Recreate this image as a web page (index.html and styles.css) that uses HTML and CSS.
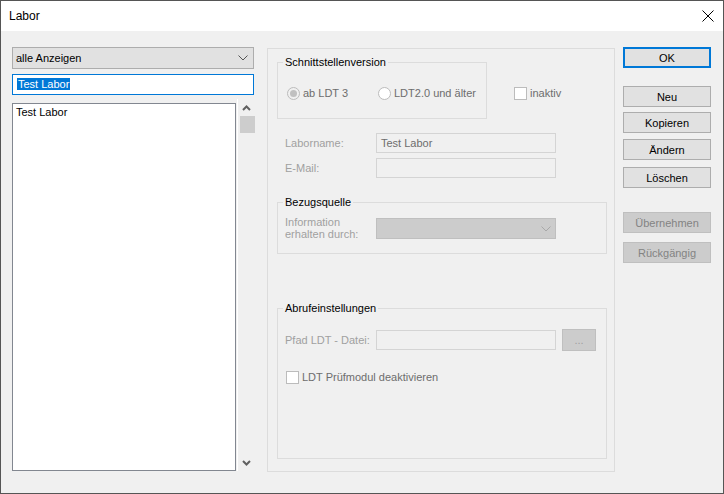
FILE: index.html
```html
<!DOCTYPE html>
<html lang="de">
<head>
    <meta charset="UTF-8">
    <title>Labor</title>
    <link rel="stylesheet" href="styles.css">
</head>
<body>

<div class="window">
    <div class="titlebar">
        <span class="title">Labor</span>
        <svg class="close" width="12" height="12" viewBox="0 0 12 12"><path d="M0.5 0.5 L11.5 11.5 M11.5 0.5 L0.5 11.5" stroke="#000" stroke-width="1" fill="none"/></svg>
    </div>

    <div class="content">
        <!-- left: filter + list -->
        <div class="left">
            <div class="combo">
                <span>alle Anzeigen</span>
                <svg width="10" height="6" viewBox="0 0 10 6"><path d="M0.5 0.5 L5 5 L9.5 0.5" stroke="#555" fill="none"/></svg>
            </div>
            <div class="searchbox"><span class="selected">Test Labor</span></div>
            <div class="listrow">
                <div class="listbox">
                    <div class="item">Test Labor</div>
                </div>
                <div class="scrollbar">
                    <svg class="arrow" width="9" height="6" viewBox="0 0 9 6"><path d="M1 5 L4.5 1.5 L8 5" stroke="#606060" stroke-width="2" fill="none"/></svg>
                    <div class="thumb"></div>
                    <div class="track"></div>
                    <svg class="arrow" width="9" height="6" viewBox="0 0 9 6"><path d="M1 1 L4.5 4.5 L8 1" stroke="#606060" stroke-width="2" fill="none"/></svg>
                </div>
            </div>
        </div>

        <!-- middle: details -->
        <div class="panel">
            <div class="row-top">
                <div class="group group-version">
                    <span class="group-title">Schnittstellenversion</span>
                    <div class="radios">
                        <label class="radio radio-first"><span class="dot checked"></span>ab LDT 3</label>
                        <label class="radio"><span class="dot"></span>LDT2.0 und älter</label>
                    </div>
                </div>
                <label class="check check-inaktiv"><span class="box"></span>inaktiv</label>
            </div>

            <div class="field field-first">
                <span class="field-label">Laborname:</span>
                <div class="input">Test Labor</div>
            </div>
            <div class="field field-mail">
                <span class="field-label">E-Mail:</span>
                <div class="input"></div>
            </div>

            <div class="group group-source">
                <span class="group-title">Bezugsquelle</span>
                <div class="field-source">
                    <span class="field-label two-line">Information<br>erhalten durch:</span>
                    <div class="combo-disabled">
                        <svg width="10" height="6" viewBox="0 0 10 6"><path d="M0.5 0.5 L5 5 L9.5 0.5" stroke="#a8a8a8" fill="none"/></svg>
                    </div>
                </div>
            </div>

            <div class="group group-fetch">
                <span class="group-title">Abrufeinstellungen</span>
                <div class="field-path">
                    <span class="field-label">Pfad LDT - Datei:</span>
                    <div class="input"></div>
                    <div class="browse">...</div>
                </div>
                <label class="check check-module"><span class="box"></span>LDT Prüfmodul deaktivieren</label>
            </div>
        </div>

        <!-- right: actions -->
        <div class="buttons">
            <div class="btn btn-ok">OK</div>
            <div class="btn btn-new">Neu</div>
            <div class="btn btn-copy">Kopieren</div>
            <div class="btn btn-edit">Ändern</div>
            <div class="btn btn-delete">Löschen</div>
            <div class="btn btn-apply disabled">Übernehmen</div>
            <div class="btn btn-undo disabled">Rückgängig</div>
        </div>
    </div>
</div>

</body>
</html>
```

FILE: styles.css
```css
body {
    margin: 0;
    font-family: "Liberation Sans", Arial, sans-serif;
    font-size: 11px;
    color: #000;
    background: #f0f0f0;
}
.window {
    width: 724px;
    height: 494px;
    box-sizing: border-box;
    border: 1px solid #555;
    background: #f0f0f0;
}
.titlebar {
    height: 30px;
    background: #fff;
    display: flex;
    align-items: center;
    justify-content: space-between;
    padding: 0 9px 0 8px;
}
.title {
    font-size: 12px;
}
.close {
    display: block;
}
.content {
    display: flex;
    align-items: flex-start;
    padding: 16px 0 0 11px;
}

/* left column */
.left {
    width: 243px;
}
.combo {
    width: 242px;
    height: 22px;
    box-sizing: border-box;
    border: 1px solid #adadad;
    background: #e1e1e1;
    display: flex;
    align-items: center;
    justify-content: space-between;
    padding: 0 5px 0 3px;
}
.combo svg {
    display: block;
}
.searchbox {
    width: 242px;
    height: 21px;
    box-sizing: border-box;
    margin-top: 5px;
    border: 1px solid #0078d7;
    background: #fff;
    padding: 2px 0 0 4px;
    line-height: 14px;
}
.selected {
    background: #0078d7;
    color: #fff;
    padding: 0 1px;
}
.listrow {
    display: flex;
    align-items: flex-end;
    gap: 1px;
    margin-top: 4px;
}
.listbox {
    width: 224px;
    height: 368px;
    box-sizing: border-box;
    border: 1px solid #828790;
    background: #fff;
}
.item {
    padding: 1px 0 0 3px;
    line-height: 14px;
}
.scrollbar {
    width: 18px;
    height: 372px;
    box-sizing: border-box;
    border-left: 1px solid #fff;
    display: flex;
    flex-direction: column;
    align-items: center;
}
.arrow {
    display: block;
    margin: 6px 0 5px;
}
.thumb {
    width: 15px;
    height: 17px;
    background: #cdcdcd;
    margin-left: 1px;
}
.track {
    flex: 1;
}

/* middle panel */
.panel {
    width: 348px;
    height: 424px;
    box-sizing: border-box;
    margin: 1px 0 0 12px;
    border: 1px solid #dcdcdc;
    padding: 0 7px 0 9px;
}
.group {
    position: relative;
    box-sizing: border-box;
    border: 1px solid #dcdcdc;
}
.group-title {
    position: absolute;
    top: -8px;
    left: 5px;
    padding: 0 2px;
    background: #f0f0f0;
    line-height: 15px;
}
.row-top {
    display: flex;
    align-items: flex-start;
    margin-top: 13px;
}
.group-version {
    width: 210px;
    height: 57px;
    padding: 24px 0 0 9px;
}
.radios {
    display: flex;
}
.radio, .check {
    display: flex;
    align-items: center;
    gap: 3px;
    color: #6d6d6d;
    line-height: 13px;
}
.radio-first {
    width: 91px;
}
.dot {
    width: 13px;
    height: 13px;
    box-sizing: border-box;
    border: 1px solid #bcbcbc;
    border-radius: 50%;
    background: #fff;
    display: flex;
    align-items: center;
    justify-content: center;
}
.dot.checked {
    background: #f0f0f0;
}
.dot.checked::after {
    content: "";
    width: 7px;
    height: 7px;
    border-radius: 50%;
    background: #c0c0c0;
}
.box {
    width: 13px;
    height: 13px;
    box-sizing: border-box;
    border: 1px solid #bcbcbc;
    background: #fff;
}
.check-inaktiv {
    margin: 25px 0 0 27px;
}
.field {
    display: flex;
    align-items: center;
    padding-left: 8px;
}
.field-first {
    margin-top: 14px;
}
.field-mail {
    margin-top: 5px;
}
.field-label {
    width: 91px;
    flex: none;
    color: #a0a0a0;
}
.input {
    width: 180px;
    height: 20px;
    box-sizing: border-box;
    border: 1px solid #d4d4d4;
    padding: 2px 0 0 4px;
    line-height: 14px;
    color: #6d6d6d;
}
.group-source {
    width: 330px;
    height: 52px;
    margin-top: 24px;
}
.field-source {
    display: flex;
    align-items: flex-start;
    padding: 15px 0 0 7px;
}
.two-line {
    line-height: 12px;
    margin-top: -2px;
}
.combo-disabled {
    width: 180px;
    height: 21px;
    box-sizing: border-box;
    border: 1px solid #bfbfbf;
    background: #cccccc;
    display: flex;
    align-items: center;
    justify-content: flex-end;
    padding-right: 4px;
}
.group-fetch {
    width: 330px;
    height: 151px;
    margin-top: 54px;
    padding: 20px 0 0 7px;
}
.field-path {
    display: flex;
    align-items: center;
    height: 22px;
}
.browse {
    width: 34px;
    height: 22px;
    box-sizing: border-box;
    margin-left: 6px;
    border: 1px solid #bfbfbf;
    background: #cccccc;
    color: #a0a0a0;
    text-align: center;
    line-height: 20px;
}
.check-module {
    margin: 20px 0 0 1px;
}

/* right column */
.buttons {
    width: 88px;
    margin-left: 8px;
}
.btn {
    height: 21px;
    box-sizing: border-box;
    border: 1px solid #adadad;
    background: #e1e1e1;
    display: flex;
    align-items: center;
    justify-content: center;
}
.btn-ok {
    border: 2px solid #0078d7;
}
.btn-new { margin-top: 18px; }
.btn-copy { margin-top: 5px; }
.btn-edit { margin-top: 6px; }
.btn-delete { margin-top: 7px; }
.btn-apply { margin-top: 24px; }
.btn-undo { margin-top: 9px; }
.btn.disabled {
    border-color: #bfbfbf;
    background: #cccccc;
    color: #838383;
}
```
